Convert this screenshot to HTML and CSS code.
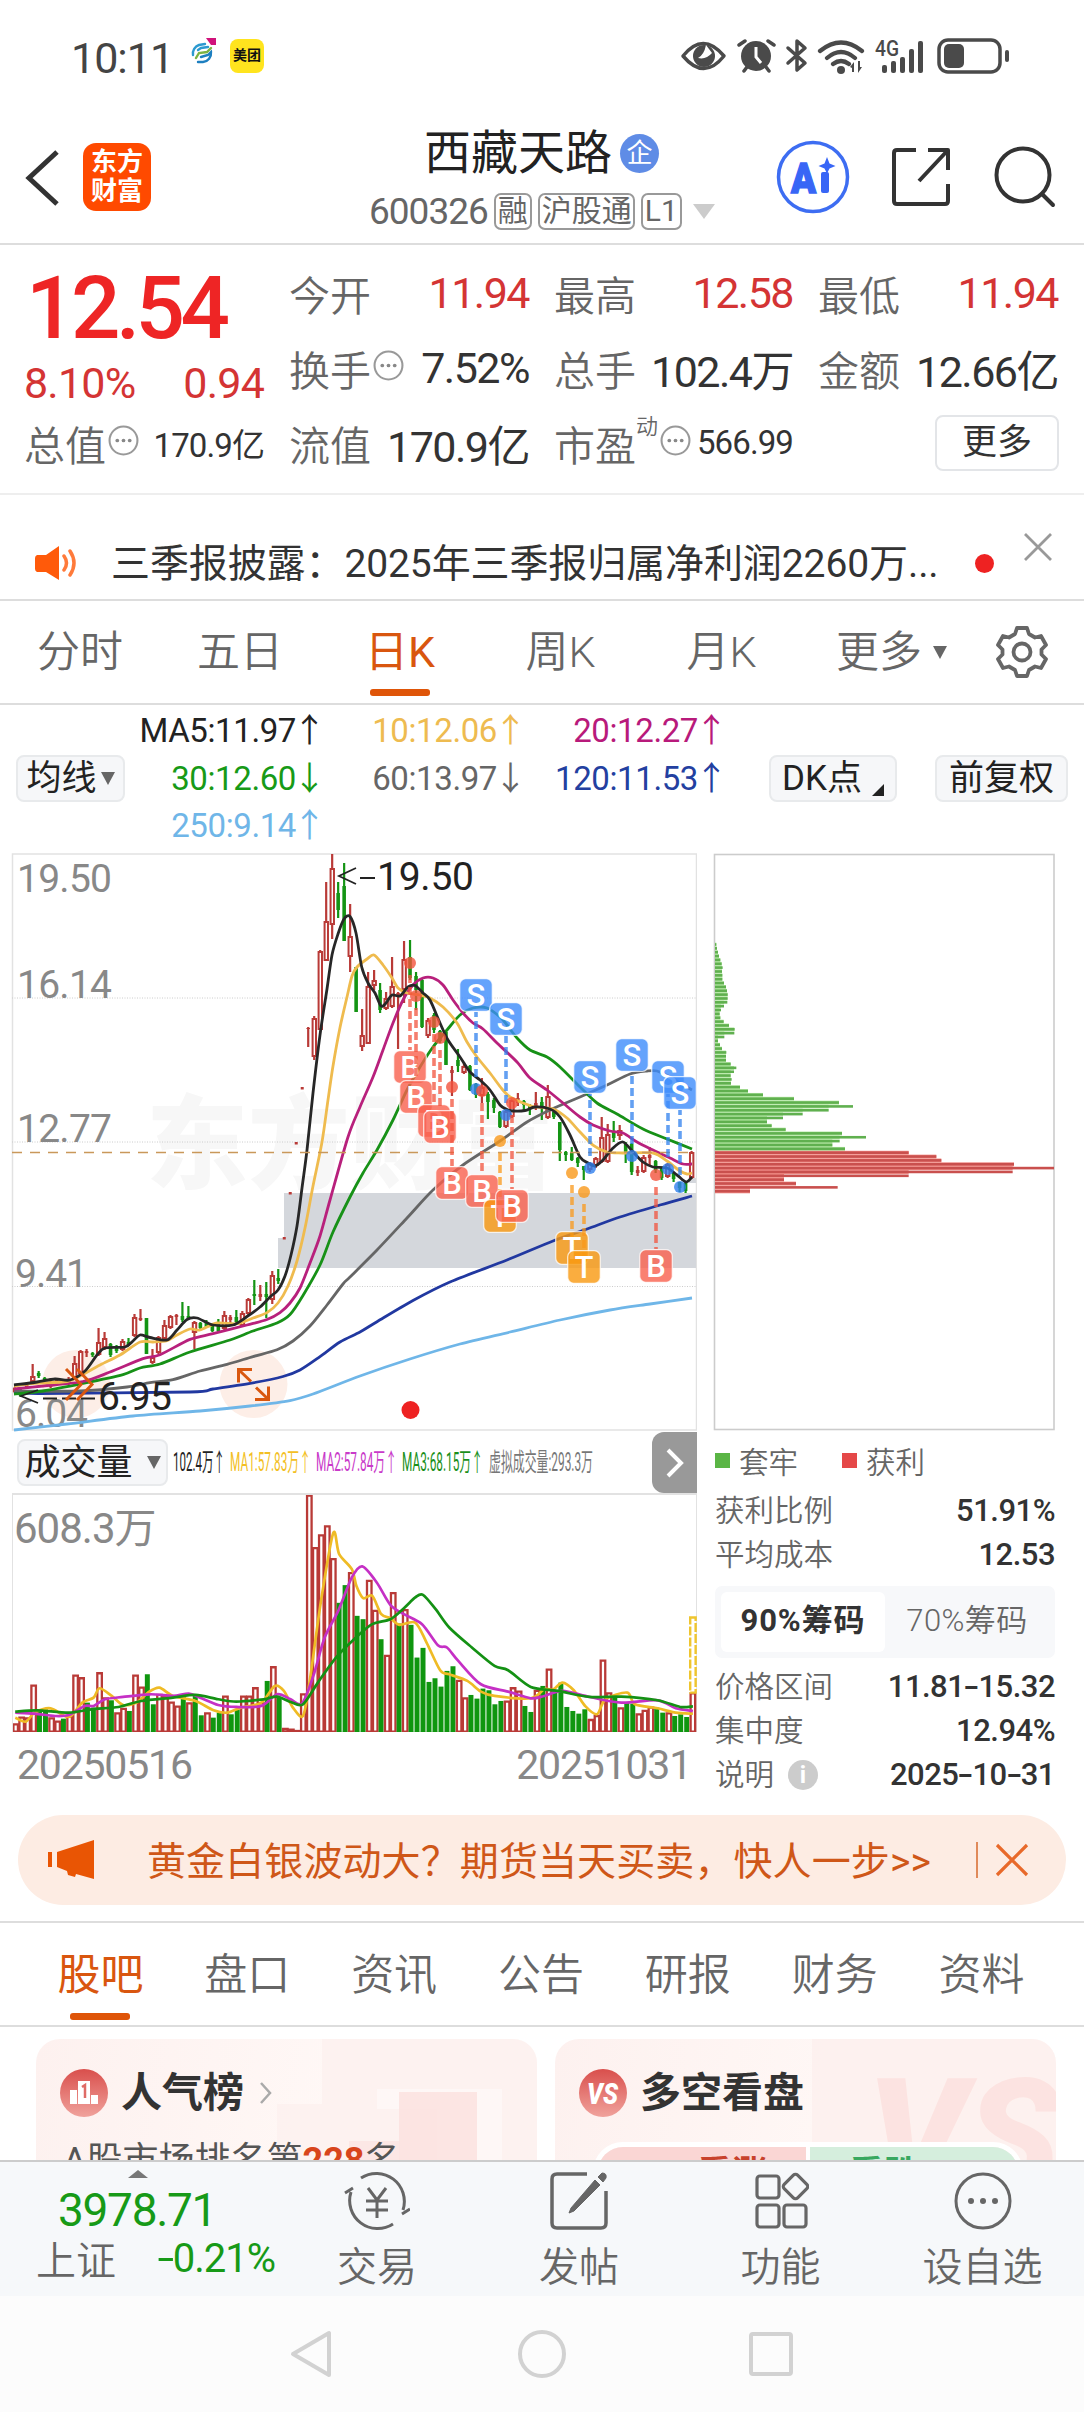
FILE: index.html
```html
<!DOCTYPE html>
<html lang="zh-CN">
<head>
<meta charset="utf-8">
<title>西藏天路 600326</title>
<link rel="stylesheet" href="styles.css">
</head>
<body>
<div class="status">
  <span class="clock">10:11</span>
  <svg class="op" width="28" height="28" viewBox="0 0 28 28"><g fill="none" stroke-width="2.4" stroke-linecap="round"><path d="M3 17a9 9 0 0 1 6-10l6-1" stroke="#2c9ad0"/><path d="M6 20l3-5 8-1 4-4" stroke="#7cb342"/><path d="M8 12l3-2 7-1" stroke="#2c9ad0"/><path d="M8 24h5a9 9 0 0 0 8-10l-3 3-7 2" stroke="#1d7fc0"/></g><path d="M16 0h10v7h-5z" fill="#d0127a"/></svg>
  <span class="mt">美团</span>
  <svg class="sys" width="336" height="40" viewBox="0 0 336 40">
    <g fill="none" stroke="#4a4a4a" stroke-width="3.5" stroke-linecap="round" stroke-linejoin="round">
      <path d="M3 20q20-25 41 0q-20 25-41 0z"/>
      <path d="M59 9l6-4M88 5l6 4M64 35l3-4M86 31l3 4"/>
      <path d="M108 12l17 15-8 7V5l8 7-17 15"/>
      <path d="M140 15q21-17 42 0M147 22q14-12 28 0M153 28q8-6 16 0" stroke-width="4.200"/>
      <rect x="259" y="4" width="61" height="32" rx="9"/>
    </g>
    <g fill="#4a4a4a">
      <circle cx="24" cy="20" r="11"/><circle cx="76" cy="20" r="15"/><circle cx="161" cy="34" r="4"/>
      <path d="M170 31l4-5v10h-2v-4zM178 37l4-6h-2v-6h-2z"/>
      <rect x="202" y="29" width="5" height="8" rx="2"/><rect x="211" y="25" width="5" height="12" rx="2"/><rect x="220" y="21" width="5" height="16" rx="2"/><rect x="229" y="13" width="5" height="24" rx="2"/><rect x="238" y="5" width="5" height="32" rx="2"/>
      <rect x="264" y="8" width="20" height="24" rx="5"/><rect x="325" y="14" width="4" height="12" rx="2"/>
      <text x="195" y="20" font-size="22" font-weight="500" textLength="24" lengthAdjust="spacingAndGlyphs">4G</text>
    </g>
    <path d="M26 9q-2 10-8 13q8 2 14-5" fill="#fff"/><path d="M76 11v10l5 6" fill="none" stroke="#fff" stroke-width="3"/>
  </svg>
</div>

<header class="head">
  <svg class="back" width="36" height="60" viewBox="0 0 36 60"><path d="M32 4L4 30l28 26" fill="none" stroke="#333" stroke-width="5"/></svg>
  <span class="logo"><b>东方</b><b>财富</b></span>
  <div class="title">
    <div class="name"><span>西藏天路</span><i class="corp">企</i></div>
    <div class="code"><span class="num">600326</span><i>融</i><i class="wide">沪股通</i><i>L1</i><svg width="22" height="15" viewBox="0 0 22 15"><path d="M0 0h22L11 15z" fill="#ccc"/></svg></div>
  </div>
  <svg class="ai" width="74" height="74" viewBox="0 0 74 74"><circle cx="37" cy="37" r="34.5" fill="none" stroke="#3d6df2" stroke-width="3.5"/><text x="15" y="53" font-size="43" font-weight="900" fill="#3866f6" stroke="#3866f6" stroke-width="1.500" textLength="25" lengthAdjust="spacingAndGlyphs">A</text><rect x="45" y="32" width="8" height="21" rx="2" fill="#3866f6"/><path d="M51 17l2.5 6.500 6 2.500-6 2.500-2.500 5-2.500-5-6-2.500 6-2.500z" fill="#3866f6"/></svg>
  <svg class="share" width="60" height="60" viewBox="0 0 60 60"><g fill="none" stroke="#333" stroke-width="4" stroke-linejoin="round"><path d="M25 3H6q-3 0-3 3v48q0 3 3 3h48q3 0 3-3V37M37 3h20v20M57 3L28 34"/></g></svg>
  <svg class="search" width="62" height="62" viewBox="0 0 62 62"><g fill="none" stroke="#333" stroke-width="4" stroke-linecap="round"><circle cx="29" cy="29" r="26.500"/><path d="M48 48l11 11"/></g></svg>
</header>

<section class="quote">
  <div class="col c0">
    <div class="price">12.54</div>
    <div class="chg red"><span>8.10%</span><span>0.94</span></div>
    <div class="row"><label>总值</label><svg class="tip"><use href="#dots"/></svg><b class="small">170.9亿</b></div>
  </div>
  <div class="col c1">
    <div class="row"><label>今开</label><b class="red">11.94</b></div>
    <div class="row"><label>换手</label><svg class="tip"><use href="#dots"/></svg><b>7.52%</b></div>
    <div class="row"><label>流值</label><b>170.9亿</b></div>
  </div>
  <div class="col c2">
    <div class="row"><label>最高</label><b class="red">12.58</b></div>
    <div class="row"><label>总手</label><b>102.4万</b></div>
    <div class="row"><label>市盈</label><sup>动</sup><svg class="tip"><use href="#dots"/></svg><b class="small">566.99</b></div>
  </div>
  <div class="col c3">
    <div class="row"><label>最低</label><b class="red">11.94</b></div>
    <div class="row"><label>金额</label><b>12.66亿</b></div>
    <div class="row end"><button class="more">更多</button></div>
  </div>
</section>
<svg width="0" height="0" class="defs"><symbol id="dots" viewBox="0 0 30 30"><circle cx="15" cy="15" r="13.500" fill="none" stroke="#999" stroke-width="2"/><g fill="#888"><circle cx="9" cy="15" r="1.800"/><circle cx="15" cy="15" r="1.800"/><circle cx="21" cy="15" r="1.800"/></g></symbol></svg>

<section class="notice">
  <svg width="44" height="36" viewBox="0 0 44 36"><path d="M3 10h9L25 1v34L12 27H3q-2-1-2-3V13q0-2 2-3z" fill="#ff5a0a"/><path d="M30 11q5 7 0 14M36 6q8 12 0 24" fill="none" stroke="#ff7a3a" stroke-width="3.500" stroke-linecap="round"/></svg>
  <span class="msg">三季报披露：2025年三季报归属净利润2260万...</span>
  <i class="reddot"></i>
  <svg class="x" width="30" height="30" viewBox="0 0 30 30"><path d="M2 2l26 26M28 2L2 28" stroke="#999" stroke-width="2.800"/></svg>
</section>

<nav class="periods">
  <span>分时</span><span>五日</span><span class="on">日K</span><span>周K</span><span>月K</span><span class="mo">更多<svg width="14" height="13" viewBox="0 0 14 13"><path d="M0 0h14L7 13z" fill="#666"/></svg></span>
  <svg class="gear" width="52" height="52" viewBox="0 0 52 52"><g fill="none" stroke="#666" stroke-width="3.800" stroke-linejoin="round"><path d="M21 2h10l2 6 6 3.500 6-1.500 5 9-4.500 4.500v5l4.500 4.500-5 9-6-1.500-6 3.500-2 6H21l-2-6-6-3.500-6 1.500-5-9 4.500-4.500v-5L2 19l5-9 6 1.500L19 8z"/><circle cx="26" cy="26" r="8.500"/></g></svg>
</nav>

<section class="ma">
  <button class="btn b1">均线<svg width="14" height="13" viewBox="0 0 14 13"><path d="M0 0h14L7 13z" fill="#666"/></svg></button>
  <div class="magrid">
    <span class="k">MA5:11.97<i>↑</i></span><span class="o">10:12.06<i>↑</i></span><span class="m">20:12.27<i>↑</i></span>
    <span class="g">30:12.60<i>↓</i></span><span class="y">60:13.97<i>↓</i></span><span class="b">120:11.53<i>↑</i></span>
    <span class="l">250:9.14<i>↑</i></span>
  </div>
  <button class="btn b2">DK点<svg width="12" height="12" viewBox="0 0 12 12"><path d="M12 0v12H0z" fill="#222"/></svg></button>
  <button class="btn b3">前复权</button>
</section>

<main class="charts">
  <div class="left">
    <svg id="kline" width="697" height="580" viewBox="0 852 697 580"></svg>
    <div class="volhead">
      <button class="btn b4">成交量<svg width="14" height="13" viewBox="0 0 14 13"><path d="M0 0h14L7 13z" fill="#666"/></svg></button>
      <svg class="volma" width="430" height="40" viewBox="172 0 430 40" font-size="25">
        <text x="173" y="28" fill="#222" textLength="52" lengthAdjust="spacingAndGlyphs">102.4万↑</text>
        <text x="230" y="28" fill="#f3bf25" textLength="81" lengthAdjust="spacingAndGlyphs">MA1:57.83万↑</text>
        <text x="316" y="28" fill="#c93ac9" textLength="81" lengthAdjust="spacingAndGlyphs">MA2:57.84万↑</text>
        <text x="402" y="28" fill="#1a901a" textLength="81" lengthAdjust="spacingAndGlyphs">MA3:68.15万↑</text>
        <text x="489" y="28" fill="#777" textLength="104" lengthAdjust="spacingAndGlyphs">虚拟成交量:293.3万</text>
      </svg>
      <span class="next"><svg width="18" height="30" viewBox="0 0 18 30"><path d="M2 2l13 13L2 28" fill="none" stroke="#fff" stroke-width="4"/></svg></span>
    </div>
    <div class="volwrap"><svg id="vol" width="684" height="237" viewBox="0 0 1510 710" preserveAspectRatio="none"></svg><span class="volmax">608.3万</span></div>
    <div class="dates"><span>20250516</span><span>20251031</span></div>
  </div>
  <aside class="chips">
    <svg id="chip" width="342" height="578" viewBox="713 853 342 578"></svg>
    <div class="legend"><i class="sq gr"></i>套牢<i class="sq rd"></i>获利</div>
    <dl><dt>获利比例</dt><dd>51.91%</dd><dt>平均成本</dt><dd>12.53</dd></dl>
    <div class="seg"><span class="act">90%筹码</span><span>70%筹码</span></div>
    <dl><dt>价格区间</dt><dd>11.81<s>-</s>15.32</dd><dt>集中度</dt><dd>12.94%</dd><dt>说明<i class="info">i</i></dt><dd>2025<s>-</s>10<s>-</s>31</dd></dl>
  </aside>
</main>

<section class="banner">
  <svg width="48" height="42" viewBox="0 0 48 42"><path d="M0 13h4v15H0zM9 13L46 1v39L28 35l-1 3-7-2-1-4L9 28z" fill="#e95504"/></svg>
  <span>黄金白银波动大？期货当天买卖，快人一步&gt;&gt;</span>
  <i></i>
  <svg width="34" height="34" viewBox="0 0 34 34"><path d="M2 2l30 30M32 2L2 32" stroke="#e8692a" stroke-width="3.200"/></svg>
</section>

<nav class="tabs"><span class="on">股吧</span><span>盘口</span><span>资讯</span><span>公告</span><span>研报</span><span>财务</span><span>资料</span></nav>

<section class="cards">
  <article class="card">
    <svg class="art" width="260" height="122" viewBox="0 0 260 122"><path d="M45 0h215v122H0V65h45z" fill="#fceeec" opacity=".6"/><path d="M100 50h125v72h-65V70H100z" fill="#fff" opacity=".4"/><path d="M72 102h50v20H72z" fill="#fbe0de" opacity=".6"/><rect x="122" y="53" width="78" height="69" fill="#fbe0de" opacity=".8"/></svg>
    <h3><svg width="48" height="48" viewBox="0 0 48 48"><circle cx="24" cy="24" r="24" fill="url(#rg)"/><path d="M10 21h7v14h-7zM18 12h12v23H18zM31 26h7v9h-7z" fill="#fff"/><path d="M22 18l3-2v13" fill="none" stroke="#df6b66" stroke-width="2.500"/></svg>人气榜<svg class="chev" width="14" height="24" viewBox="0 0 14 24"><path d="M2 2l9 10-9 10" fill="none" stroke="#aaa" stroke-width="2.500"/></svg></h3>
    <p>A股市场排名第<b>228</b>名</p>
  </article>
  <article class="card">
    <svg class="art" width="244" height="122" viewBox="0 0 244 122"><path d="M0 0h244v122H0z" fill="#fceeec" opacity=".7"/><text x="55" y="150" font-size="155" font-weight="900" font-style="italic" fill="#fbdedc" opacity=".75">VS</text></svg>
    <h3><svg width="48" height="48" viewBox="0 0 48 48"><defs><linearGradient id="rg" x1="0" y1="0" x2="0" y2="1"><stop offset="0" stop-color="#d94f4c"/><stop offset="1" stop-color="#f0a29c"/></linearGradient></defs><circle cx="24" cy="24" r="24" fill="url(#rg)"/><text x="8" y="35" font-size="29" font-weight="900" font-style="italic" fill="#fff" textLength="31" lengthAdjust="spacingAndGlyphs">VS</text></svg>多空看盘</h3>
    <div class="vote"><span class="up">看涨</span><span class="dn">看跌</span></div>
  </article>
</section>

<footer class="bar">
  <div class="idx"><svg width="20" height="8" viewBox="0 0 20 8"><path d="M0 8h20L10 0z" fill="#777"/></svg><strong>3978.71</strong><div><label>上证</label><span><s>-</s>0.21%</span></div></div>
  <div class="it"><svg width="66" height="60" viewBox="0 0 66 60"><g fill="none" stroke="#666" stroke-width="3"><path d="M17 7a28 28 0 0 1 42 32M49 53a28 28 0 0 1-42-32M1 22l8-5M66 38l-8 5"/><path d="M24 17l9 12 9-12M33 29v18M22 30h22M22 39h22"/></g></svg>交易</div>
  <div class="it"><svg width="60" height="60" viewBox="0 0 60 60"><path d="M38 3H8q-5 0-5 5v44q0 5 5 5h44q5 0 5-5V20" fill="none" stroke="#666" stroke-width="3.500"/><path d="M46 9l5 5-26 26-5 2 2-5zM49 6l4-4q5 0 4 5l-3 4z" fill="#666" stroke="#666"/></svg>发帖</div>
  <div class="it"><svg width="56" height="60" viewBox="0 0 56 60"><g fill="none" stroke="#666" stroke-width="3.200"><rect x="4" y="5" width="22" height="22" rx="3"/><rect x="4" y="34" width="22" height="22" rx="3"/><rect x="31" y="34" width="22" height="22" rx="3"/><rect x="33" y="6" width="19" height="19" rx="3" transform="rotate(45 42.500 15.500)"/></g></svg>功能</div>
  <div class="it"><svg width="60" height="60" viewBox="0 0 60 60"><circle cx="30" cy="30" r="27" fill="none" stroke="#666" stroke-width="3"/><g fill="#666"><circle cx="18" cy="30" r="3"/><circle cx="30" cy="30" r="3"/><circle cx="42" cy="30" r="3"/></g></svg>设自选</div>
</footer>
<div class="sysnav">
  <svg width="44" height="50" viewBox="0 0 44 50"><path d="M40 4v42L4 25z" fill="none" stroke="#d2d2d2" stroke-width="4" stroke-linejoin="round"/></svg>
  <svg width="50" height="50" viewBox="0 0 50 50"><circle cx="25" cy="25" r="22" fill="none" stroke="#d2d2d2" stroke-width="4"/></svg>
  <svg width="46" height="46" viewBox="0 0 46 46"><rect x="3" y="3" width="40" height="40" rx="2" fill="none" stroke="#d2d2d2" stroke-width="4"/></svg>
</div>
<script src="charts.js"></script>
</body>
</html>
```

FILE: styles.css
```css
* { box-sizing: border-box; }
body { margin: 0; width: 1084px; height: 2412px; overflow: hidden; background: #fff; color: #333; font-family: Roboto, "Noto Sans CJK SC", sans-serif; display: flex; flex-direction: column; }
i, s { font-style: normal; text-decoration: none; }
svg { display: block; flex: none; }
svg text { font-family: Roboto, "Noto Sans CJK SC", sans-serif; }
button { font-family: inherit; padding: 0; }
span, label, b, button, .code i { white-space: nowrap; }
.defs { position: absolute; }
.red { color: #d43434; }

.status { height: 110px; flex: none; display: flex; align-items: center; padding: 2px 68px 0 71px; color: #444; }
.clock { font-size: 43px; letter-spacing: -1px; width: 119px; padding-top: 3px; }
.op { margin-top: -8px; }
.mt { width: 34px; height: 34px; margin-left: 12px; border-radius: 8px; background: #ffe41e; color: #111; font-size: 14px; line-height: 33px; text-align: center; font-weight: 700; }
.sys { margin-left: auto; }

.head { height: 135px; flex: none; display: flex; align-items: flex-start; border-bottom: 2px solid #ddd; padding-left: 25px; }
.back { margin-top: 38px; }
.logo { width: 68px; height: 68px; margin: 33px 0 0 22px; border-radius: 13px; background: #ff4a00; color: #fff; display: flex; flex-direction: column; align-items: center; justify-content: center; }
.logo b { font-size: 26px; line-height: 29px; font-weight: 700; }
.title { margin-left: 218px; width: 343px; }
.name { display: flex; align-items: center; font-size: 47px; line-height: 56px; color: #222; padding: 14px 0 0 55px; height: 72px; }
.corp { width: 39px; height: 39px; border-radius: 50%; background: #5f8ce6; color: #fff; font-size: 26px; line-height: 38px; text-align: center; margin-left: 8px; }
.code { display: flex; align-items: center; gap: 6px; color: #666; font-size: 37px; height: 58px; }
.code .num { letter-spacing: -1px; width: 119px; }
.code i { flex: none; height: 37px; border: 2px solid #999; border-radius: 7px; font-size: 30px; line-height: 32px; padding: 0 2px; }
.code .wide { width: 97px; }
.code i:nth-of-type(3) { width: 41px; text-align: center; }
.code svg { margin-left: 5px; }
.ai { margin: 30px 0 0 64px; }
.share { margin: 37px 0 0 41px; }
.search { margin: 36px 0 0 43px; }

.quote { height: 250px; flex: none; display: grid; grid-template-columns: 240px 240px 239px 240px; column-gap: 25px; padding: 10px 0 0 24px; border-bottom: 2px solid #eee; }
.col { display: flex; flex-direction: column; min-width: 0; }
.row { height: 75px; display: flex; align-items: center; }
.row label { font-size: 41px; color: #666; font-weight: 350; }
.row b { margin-left: auto; font-weight: 400; font-size: 43px; letter-spacing: -1.500px; margin-right: 0; }
.row .small { font-size: 33px; letter-spacing: -.9px; }
.tip { width: 31px; height: 31px; margin: -4px 0 0 2px; }
.row sup { font-size: 22px; color: #666; align-self: flex-start; line-height: 24px; margin-top: 10px; font-weight: 350; }
.row .more { width: 124px; height: 56px; border: 2px solid #e3e5e8; border-radius: 8px; background: #fff; font-size: 35px; line-height: 48px; color: #333; margin-right: -1px; }
.row.end { justify-content: flex-end; }
.price { height: 95px; font-size: 87px; line-height: 107px; font-weight: 500; color: #ee2525; letter-spacing: -4.500px; padding-left: 2px; }
.chg { height: 55px; display: flex; justify-content: space-between; font-size: 43px; line-height: 66px; letter-spacing: -.8px; }

.notice { height: 106px; flex: none; display: flex; align-items: center; padding: 32px 0 0 34px; border-bottom: 2px solid #ddd; }
.msg { margin: -6px 0 0 33px; width: 864px; font-size: 39px; letter-spacing: -.1px; color: #333; }
.reddot { width: 19px; height: 19px; border-radius: 50%; background: #ee2222; }
.x { margin: -33px 0 0 29px; }

.periods { height: 104px; flex: none; display: grid; grid-template-columns: 160px 160px 160px 161px 161px 162px 60px; align-items: center; border-bottom: 2px solid #ddd; font-size: 43px; color: #666; line-height: 102px; }
.periods span { text-align: center; position: relative; font-weight: 350; }
.periods .on { color: #d9560f; font-weight: 400; }
.periods .on::after, .tabs .on::after { content: ""; position: absolute; left: 50%; bottom: 7px; width: 60px; height: 7px; margin-left: -30px; border-radius: 3px; background: #df5508; }
.periods .mo { display: flex; align-items: center; gap: 11px; padding-left: 34px; }
.gear { margin-left: 32px; }

.ma { height: 147px; flex: none; display: flex; align-items: center; padding: 0 16px; }
.btn { height: 47px; border: 2px solid #e8eaec; border-radius: 8px; background: #f6f7f9; font-size: 35px; line-height: 40px; color: #222; display: flex; align-items: center; justify-content: center; }
.b1 { width: 109px; gap: 4px; }
.magrid { width: 595px; display: grid; grid-template-columns: 193px 201px 201px; font-size: 33px; line-height: 47.500px; text-align: right; letter-spacing: -.4px; }
.magrid i { display: inline-block; width: 25px; text-align: center; font-family: "Noto Sans CJK SC"; line-height: 40px; letter-spacing: 0; margin-left: -3px; }
.k { color: #222; } .o { color: #eebb50; } .m { color: #b81a7b; } .g { color: #179a17; } .y { color: #666; } .b { color: #2340a0; } .l { color: #6fb6e8; }
.b2 { width: 128px; margin-left: 49px; gap: 10px; }
.b2 svg { align-self: flex-end; margin-bottom: 4px; }
.b3 { width: 133px; margin-left: auto; }

.charts { height: 947px; flex: none; display: flex; }
.left { width: 697px; }
.volhead { height: 61px; display: flex; align-items: center; padding-left: 17px; }
.b4 { width: 151px; gap: 14px; font-size: 36px; }
.volma { margin-left: 4px; }
.next { width: 45px; height: 61px; margin-left: auto; border-radius: 12px 0 0 12px; background: #999; display: flex; align-items: center; justify-content: center; }
.volwrap { position: relative; height: 239px; margin-left: 12px; border: 1px solid #e2e2e2; border-top-width: 2px; }
.volmax { position: absolute; left: 1px; top: 6px; font-size: 42px; line-height: 56px; color: #888; letter-spacing: -1px; }
.dates { display: flex; justify-content: space-between; padding: 9px 6px 0 17px; font-size: 41px; line-height: 48px; color: #888; letter-spacing: -1.200px; }
.chips { margin-left: 16px; width: 342px; padding-top: 1px; color: #666; }
.legend { height: 58px; display: flex; align-items: center; font-size: 29.500px; font-weight: 350; padding-left: 2px; }
.sq { width: 15px; height: 15px; margin-right: 9px; background: #5ab545; }
.rd { background: #e54848; margin-left: 44px; }
dl { margin: 0; display: grid; grid-template-columns: auto auto; font-size: 29.500px; line-height: 44px; padding-left: 2px; font-weight: 350; }
dt { display: flex; align-items: center; }
dd { margin: 0; text-align: right; font-weight: 500; font-size: 31px; color: #333; letter-spacing: -.5px; }
dd s, .idx s { display: inline-block; transform: scaleX(1.500); margin: 0 3px; }
dd s { margin: 0 2px; }
.info { width: 30px; height: 30px; border-radius: 50%; background: #ccc; color: #fff; font-size: 24px; line-height: 30px; text-align: center; font-weight: 700; margin-left: 14px; }
.seg { height: 72px; margin: 9px 0 7px 2px; border-radius: 7px; background: #f7f8fa; display: flex; padding: 6px; font-size: 31px; line-height: 58px; }
.seg span { flex: 1; text-align: center; font-weight: 350; letter-spacing: .4px; }
.seg .act { background: #fff; border-radius: 6px; color: #333; font-weight: 700; letter-spacing: .9px; }

.banner { height: 90px; flex: none; margin: 16px 18px 0; border-radius: 45px; background: #fdece3; display: flex; align-items: center; color: #cf5718; font-size: 39px; padding-left: 30px; }
.banner span { width: 829px; margin: -4px 0 0 51px; font-size: 39px; letter-spacing: .1px; }
.banner i { width: 1.500px; height: 36px; background: #e08a5a; margin-right: 17px; }

.tabs { height: 106px; flex: none; margin-top: 16px; border-top: 2px solid #ddd; border-bottom: 2px solid #ddd; padding: 0 29px 0 27px; display: grid; grid-template-columns: repeat(7, 1fr); text-align: center; font-size: 43px; line-height: 104px; color: #666; font-weight: 350; }
.tabs span { position: relative; }
.tabs .on { color: #d9560f; font-weight: 400; }

.cards { height: 133px; flex: none; padding: 12px 28px 0 36px; display: grid; grid-template-columns: 501px 501px; column-gap: 18px; overflow: hidden; }
.card { position: relative; height: 170px; border-radius: 24px; background: linear-gradient(100deg, #fdf1ef, #fff8f6 60%); padding: 28px 0 0 24px; overflow: hidden; }
.art { position: absolute; right: 0; top: 0; }
.card h3 { position: relative; margin: 0; font-size: 41px; line-height: 52px; font-weight: 700; color: #333; display: flex; align-items: center; gap: 13px; }
.chev { margin-left: 2px; }
.card p { position: relative; margin: 20px 0 0 3px; font-size: 36px; color: #555; line-height: 44px; }
.card p b { color: #d8451c; }
.vote { position: relative; width: 430px; height: 60px; margin: 23px 0 0 14px; border: 5px solid #fff; border-radius: 30px; display: flex; overflow: hidden; font-size: 35px; line-height: 56px; font-weight: 700; }
.vote span { flex: 1; text-align: center; }
.up { background: #fad6d4; color: #c8422c; padding-left: 60px; }
.dn { background: #d5eedd; color: #38a860; padding-right: 60px; border-left: 4px solid #fff; }

.bar { height: 136px; flex: none; border-top: 2px solid #ccc; background: #f6f8fa; display: grid; grid-template-columns: 276px 202px 202px 201px 203px; }
.bar .it { display: flex; flex-direction: column; align-items: center; padding-top: 9px; font-size: 40px; line-height: 56px; gap: 9px; color: #666; font-weight: 350; }
.idx { color: #179a17; }
.idx svg { margin: 8px 0 0 128px; }
.idx strong { display: block; font-size: 46px; line-height: 50px; font-weight: 400; letter-spacing: -1.300px; margin: 7px 0 0 58px; }
.idx div { display: flex; align-items: center; justify-content: space-between; padding: 0 1px 0 36px; font-size: 40px; height: 48px; letter-spacing: -1px; margin-top: -1px; }
.idx label { color: #666; letter-spacing: 0; font-weight: 350; }
.sysnav { flex: 1; background: #fcfcfc; display: grid; grid-template-columns: 310px 464px 310px; align-items: start; justify-items: center; padding-top: 33px; }
.sysnav svg:first-child { justify-self: end; margin-right: -23px; }
.sysnav svg:last-child { justify-self: start; margin: 2px 0 0 -26px; }
```

FILE: charts.js
```js
const RED = '#b93a37', GREEN = '#149414';

function linePath(flat) {
  const p = [];
  for (let i = 0; i < flat.length; i += 2) p.push([flat[i], flat[i + 1]]);
  let d = `M${p[0]}`;
  for (let i = 0; i < p.length - 1; i++) {
    const a = p[i - 1] || p[i], b = p[i], c = p[i + 1], e = p[i + 2] || c;
    d += `C${b[0] + (c[0] - a[0]) / 7} ${b[1] + (c[1] - a[1]) / 7} ${c[0] - (e[0] - b[0]) / 7} ${c[1] - (e[1] - b[1]) / 7} ${c[0]} ${c[1]}`;
  }
  return d;
}

// Candles: direction, high, body top, body bottom, low
const candles = `r1387,1388,1392,1393 g1389,1390,1396,1397 r1384,1385,1388,1389 r1364,1376,1382,1384 g1371,1373,1376,1378 g1377,1378,1380,1381 r1378,1382,1387,1388 r1379,1380,1384,1385 g1379,1380,1382,1383 r1377,1379,1384,1385
r1356,1363,1378,1379 r1350,1351,1374,1375 r1349,1351,1353,1357 g1352,1353,1355,1357 r1328,1342,1355,1356 r1332,1338,1348,1350 g1343,1344,1355,1357 g1345,1348,1351,1353 r1339,1341,1350,1351 g1338,1342,1345,1346
r1314,1317,1336,1337 r1309,1318,1320,1321 g1318,1318,1354,1354 r1349,1357,1363,1364 r1336,1337,1353,1354 r1320,1325,1339,1340 r1315,1316,1328,1329 r1314,1315,1317,1325 g1302,1316,1320,1322 g1306,1316,1318,1319
r1321,1322,1333,1349 g1322,1323,1328,1329 g1320,1322,1327,1328 g1325,1326,1331,1332 g1319,1324,1331,1332 r1311,1315,1329,1330 r1315,1317,1320,1323 g1310,1317,1322,1323 r1311,1313,1326,1327 r1298,1299,1314,1315
g1280,1294,1296,1305 r1285,1294,1297,1301 g1282,1294,1297,1318 r1271,1275,1300,1304 g1269,1278,1281,1284 r1238,1238,1238,1238 r1193,1193,1193,1193 r1143,1143,1143,1143 r1088,1088,1088,1088 r1027,1028,1029,1047
r1016,1018,1057,1060 r950,951,1030,1030 r882,921,961,961 r854,868,925,939 g882,893,910,918 g863,886,941,941 r904,936,957,972 g967,967,1012,1012 r1009,1035,1047,1051 r972,986,1044,1044
r970,980,986,990 g983,990,1010,1013 r992,998,1009,1010 r957,986,1007,1008 r992,993,997,1049 r941,959,990,1003 g940,957,978,980 g972,976,990,1010 g979,980,1027,1028 r1018,1020,1036,1038
g1013,1015,1030,1033 g1030,1031,1041,1043 g1032,1032,1065,1065 r1066,1070,1073,1096 g1049,1060,1066,1072 r1062,1066,1073,1074 g1065,1066,1090,1091 g1083,1084,1095,1098 r1078,1087,1096,1103 g1092,1094,1102,1119
g1098,1100,1108,1113 g1111,1112,1127,1128 r1110,1111,1127,1128 r1098,1100,1117,1118 r1093,1098,1103,1106 g1100,1101,1105,1112 g1104,1105,1109,1115 r1092,1103,1106,1110 g1097,1102,1107,1120 r1085,1096,1118,1119
g1110,1112,1117,1119 g1122,1122,1150,1161 g1151,1152,1155,1161 g1147,1153,1160,1161 g1157,1158,1163,1167 g1166,1166,1170,1180 r1162,1163,1170,1172 r1157,1158,1166,1168 r1117,1137,1162,1163 r1124,1134,1162,1163
g1121,1132,1138,1142 r1125,1130,1136,1140 g1142,1144,1154,1163 g1143,1144,1172,1175 r1166,1170,1173,1176 r1155,1157,1172,1173 r1147,1155,1158,1165 g1160,1161,1170,1173 g1167,1168,1178,1180 r1163,1164,1177,1178
g1172,1173,1179,1182 g1182,1182,1188,1192 g1182,1183,1191,1193 r1151,1152,1178,1179`.split(/\s+/);

const averages = {
  '#6fb6e8': [14,1430,67,1424,133,1416,200,1411,250,1406,290,1400.600,313,1394,360,1376,410,1359,460,1344,510,1332,560,1320,610,1310,650,1304,692,1298],
  '#2138a0': [14,1392.500,40,1393.500,190,1392,213,1389,250,1383.400,283,1376.500,300,1370,320,1356.600,340,1342,360,1332,377,1321.700,413,1300.500,450,1282,507,1260,553,1241,587,1229,620,1217,660,1205,692,1196],
  '#666': [14,1391,80,1391,127,1387,150,1382.700,173,1379.600,200,1371,227,1364.300,253,1356.600,277,1349.800,293,1341,310,1326,327,1305,343,1284,350,1277,377,1250,407,1218,433,1190,463,1165,500,1141,527,1122,550,1110,580,1097,607,1085,630,1074,647,1071,657,1071,670,1077,680,1083,692,1090],
  '#179117': [14,1394,43,1391,83,1383.400,123,1374.600,140,1368,160,1364,190,1352,230,1340,253,1331,277,1323,290,1314.500,303,1295.400,320,1265,333,1232,350,1197,363,1173,377,1150,393,1120,407,1090,420,1067,433,1047,447,1030,460,1015,473,1008,487,1008,500,1017,507,1025,517,1038,530,1050,547,1057,560,1067,580,1087,597,1103,617,1114,643,1129,667,1139,692,1149],
  '#b8207c': [14,1389,43,1386,83,1381.500,110,1372,143,1358.600,160,1354.700,190,1339.400,213,1333.700,247,1325,267,1319.500,280,1312.600,290,1303,300,1288,310,1263,320,1236,330,1200,348,1137,360,1107,373,1077,383,1050,393,1023,403,1000,413,985,423,978,433,978,443,985,453,1000,463,1013,473,1023,483,1029,497,1043,517,1062,530,1078,547,1090,563,1103,580,1117,593,1125,610,1131,623,1133,637,1142,653,1150,670,1158,683,1164,692,1164],
  '#efbb4e': [14,1386,33,1383.500,67,1381.500,80,1376,100,1365,120,1355,140,1342,153,1342,167,1340.600,177,1335,190,1329,200,1330,217,1323,237,1323.700,253,1318,267,1312.600,278,1303,288,1286,297,1261,305,1228,313,1186,322,1142,328,1100,333,1066,340,1027.500,347,997,352,976,357,967,367,959,374,955,383,965,392,978,398,988,407,993,420,995,430,998,443,1007,457,1023,467,1042,477,1057,490,1073,502,1089,510,1097,523,1103,535,1107,553,1109,567,1118,580,1132,593,1145,607,1152,623,1153,653,1153,667,1161,680,1171,687,1174,692,1173],
  '#272727': [14,1385,37,1382,55,1379,70,1380,85,1371,97,1355,105,1348,125,1347,133,1341,140,1335,150,1337.500,167,1340,177,1330,187,1319.500,197,1318,213,1325,233,1325,247,1316.500,260,1307,270,1297,278,1290,285,1276,291,1255,297,1226,302,1188,307,1150,313,1093,320,1035,327,989,332,955,338,934,344,919,350,916.500,356,933,361.700,967,368,983,375,993,381,1006,386,1003,392,995,400,996,408,987,415,985.500,423,993,430,1000,440,1023,448,1040,460,1057,470,1072,480,1080,490,1090,500,1105,507,1109.500,513,1111,525,1110.500,535,1107,550,1109,560,1117,570,1135,580,1157,588,1163,595,1166,603,1160,613,1148,623,1142,633,1152,643,1162,653,1167,667,1168,677,1175,686,1182,692,1177]
};

// Trade marks: letter, x, dot y, tag y
const marks = [
  ['B',410,963,1067],['B',416,996,1097],['B',434,1022,1121],['B',440,1038,1127],['B',452,1087,1183],['S',476,1089,995],
  ['B',482,1091,1191],['T',500,1141,1216],['S',506,1115,1019],['B',512,1103,1206],['T',572,1173,1248],['T',584,1192,1267],
  ['S',590,1168,1077],['S',632,1156,1055],['B',656,1175,1266],['S',668,1169,1077],['S',680,1187,1093]
];
const markColors = { B: ['#f9604e', '#f2533c'], S: ['#3d8cfb', '#2f80ee'], T: ['#f9980f', '#f9981a'] };

let k = '<text x="146" y="1181" font-size="102" font-weight="900" fill="#f7f7f7">东方财富</text>';
k += '<rect x="12.500" y="854" width="684" height="576" fill="none" stroke="#e2e2e2" stroke-width="1.500"/>';
for (const y of [998, 1142, 1286.500]) k += `<path d="M12 ${y}H696" stroke="#ccc" stroke-dasharray="1 1.500"/>`;
k += '<path d="M284 1193H696V1268H278V1238H284z" fill="#d4d7dc"/><path d="M689 1178h7v5h-7z" fill="#d4d7dc"/>';
k += '<circle cx="76" cy="1384" r="34" fill="#fdeee7"/><circle cx="253.500" cy="1384" r="34" fill="#fdeee7"/>';
[['19.50', 892, 17], ['16.14', 997.500, 17], ['12.77', 1142, 17], ['9.41', 1287, 15], ['6.04', 1426.500, 15]].forEach(([t, y, x]) => {
  k += `<text x="${x}" y="${y}" font-size="39" fill="#888" textLength="${t.length === 5 ? 95 : 73}">${t}</text>`;
});
candles.forEach((c, i) => {
  const x = 14.7 + i * 5.99, up = c[0] === 'r', [h, t, b, l] = c.slice(1).split(',').map(Number), col = up ? RED : GREEN;
  if (h === l) { k += `<rect x="${x - 1.5}" y="${h - 1}" width="3" height="2.500" fill="${col}"/>`; return; }
  k += `<path d="M${x} ${h}V${t}M${x} ${b}V${l}" stroke="${col}" stroke-width="2.200"/>`;
  k += up && b - t > 5
    ? `<rect x="${x - 1.6}" y="${t + 1}" width="3.400" height="${b - t - 2}" fill="#fff" stroke="${col}" stroke-width="2"/>`
    : `<rect x="${x - 1.8}" y="${t}" width="3.600" height="${b - t}" fill="${col}"/>`;
});
for (const [c, pts] of Object.entries(averages)) k += `<path d="${linePath(pts)}" fill="none" stroke="${c}" stroke-width="2.800"/>`;
k += '<path d="M12 1152.500H696" stroke="#c9985a" stroke-width="1.300" stroke-dasharray="10 8"/>';
for (const [t, x, dot, tag] of marks) {
  const [bg, fg] = markColors[t], s = dot < tag ? 1 : -1;
  k += `<path d="M${x} ${dot + s * 12}V${tag - s * (t === 'T' ? 2 : 17)}" stroke="${fg}" stroke-opacity=".75" stroke-width="3.600" stroke-dasharray="8 4"/>`;
  k += `<circle cx="${x}" cy="${dot}" r="6" fill="${fg}" fill-opacity=".8"/>`;
  k += `<rect x="${x - 16.3}" y="${tag - 16.3}" width="32.600" height="32.600" rx="6" fill="${bg}" fill-opacity=".8" stroke="#fff" stroke-opacity=".75" stroke-width="1.300"/>`;
  k += `<text x="${x}" y="${tag + 11}" text-anchor="middle" font-size="31" font-weight="500" fill="#fff">${t}</text>`;
}
k += '<g fill="none" stroke="#222" stroke-width="1.800"><path d="M356 868l-17 8 17 8M360 878h15M38 1390l-17 6 17 7M43 1398.500h14M62 1398.500h14M81 1398.500h14"/></g>';
k += '<text x="377" y="890" font-size="39" fill="#222" textLength="97">19.50</text><text x="98" y="1410" font-size="39" fill="#222" textLength="74">6.95</text>';
k += '<g fill="none" stroke="#d9570f" stroke-width="3"><path d="M66 1369l15 15.500-15 15.500M77 1369l15 15.500-15 15.500M252 1369.500h-13.500v13M239 1370l12 11.500M255 1399.500h13.500v-13M268 1399l-12-11.500"/></g>';
k += '<circle cx="410.500" cy="1410" r="9" fill="#ee2222"/>';
document.getElementById('kline').innerHTML = k;

// Volume: direction and bar top on a 710-unit scale
const vols = `r685 r665 r667 r569 g642 g642 r667 r677 g670 r662 r539 r547 g622 g637 r532 r607 g615 r652 r639 g647 r539 r575 g537 g627 r597 r602 r620 r632 g602 r622 g597 g660 r652 g667 g652 r602 g657 g642 r602 r602 r577 r622 g557 r514 g607 r699 r701 r705 r595 r0 r157 r119 r92 r190 g323 g270 r232 g362 g372 r255 r345 g432 r480 r292 g385 r343 g389 g487 g458 g560 g549 g574 g527 g513 r555 r607 g599 g610 g580 g585 g627 g617 r617 r577 r587 g632 g650 r585 g572 r521 g587 g562 g635 g647 g655 g642 r672 r660 r494 r592 g607 r637 g622 g625 r655 r645 r635 g637 g652 r652 g662 g657 g665 r592`.split(' ');
const volLines = {
  '#efbb25': [5,667,28,679,48,652,83,639,123,665,153,622,178,607,191,579,218,602,243,629,273,622,298,592,323,577,353,602,403,617,443,645,473,652,503,637,548,622,578,572,598,587,618,637,640,662,654,567,680,317,707,114,720,177,748,222,758,272,773,309,793,302,813,357,833,369,853,389,888,382,913,442,943,525,963,537,1003,557,1033,589,1063,602,1143,609,1173,582,1193,582,1213,562,1238,585,1263,632,1289,657,1308,612,1356,592,1373,627,1423,639,1463,652,1501,655],
  '#c530c5': [5,652,48,655,93,662,123,659,158,632,178,632,203,612,243,605,303,597,353,602,388,595,413,607,453,629,493,635,548,632,583,597,613,612,638,625,663,542,688,427,718,347,748,247,771,214,803,262,833,329,863,357,903,387,938,450,958,457,983,497,1033,567,1093,589,1143,609,1173,602,1213,587,1273,605,1343,622,1423,615,1463,639,1501,647],
  '#149114': [5,649,53,645,123,652,173,642,233,635,283,617,353,607,403,599,453,612,493,619,553,612,583,604,613,620,640,627,673,562,713,487,753,432,793,387,833,372,863,339,888,307,905,299,933,342,963,397,1013,457,1063,512,1093,525,1143,575,1203,587,1273,605,1343,604,1423,615,1473,635,1501,633]
};
let v = '';
vols.forEach((s, i) => {
  const x = 5.5 + i * 13.23, y = +s.slice(1);
  v += s[0] === 'r'
    ? `<rect x="${x - 4.6}" y="${y + 2}" width="10" height="${707 - y}" fill="#fff" stroke="${RED}" stroke-width="2.300" vector-effect="non-scaling-stroke"/>`
    : `<rect x="${x - 5.5}" y="${y}" width="11" height="${710 - y}" fill="#0f960f"/>`;
});
v += '<rect x="1495" y="367" width="12" height="225" fill="#fff" stroke="#efc52e" stroke-width="2.400" stroke-dasharray="9 2" vector-effect="non-scaling-stroke"/>';
for (const [c, pts] of Object.entries(volLines)) v += `<path d="${linePath(pts)}" fill="none" stroke="${c}" stroke-width="2.700" vector-effect="non-scaling-stroke"/>`;
document.getElementById('vol').innerHTML = v;

// Chip distribution, top to bottom; 1017 is the full width
const chipBars = [4,6,9,12,16,20,23,21,22,22,27,33,36,38,38,37,27,18,14,16,26,42,59,58,28,9,15,21,34,33,33,47,64,57,47,50,48,75,99,144,237,372,414,341,263,204,156,170,212,381,453,374,352,390,581,664,679,897,1017,893,581,207,243,368,105];
let c = '<rect x="714.500" y="854.500" width="339.500" height="575" fill="none" stroke="#ccc" stroke-width="1.600"/>';
chipBars.forEach((w, i) => {
  const y = 943.2 + i * 3.855, green = i < 54;
  c += `<rect x="715" y="${y - .6}" width="${Math.min(w, chipBars[i + 1] || w) / 3}" height="4" fill="${green ? '#b5e8a5' : '#f3908a'}"/>`;
  c += `<rect x="715" y="${y}" width="${w / 3}" height="2.600" fill="${green ? '#60b04f' : '#c9504e'}"/>`;
});
document.getElementById('chip').innerHTML = c;
```
